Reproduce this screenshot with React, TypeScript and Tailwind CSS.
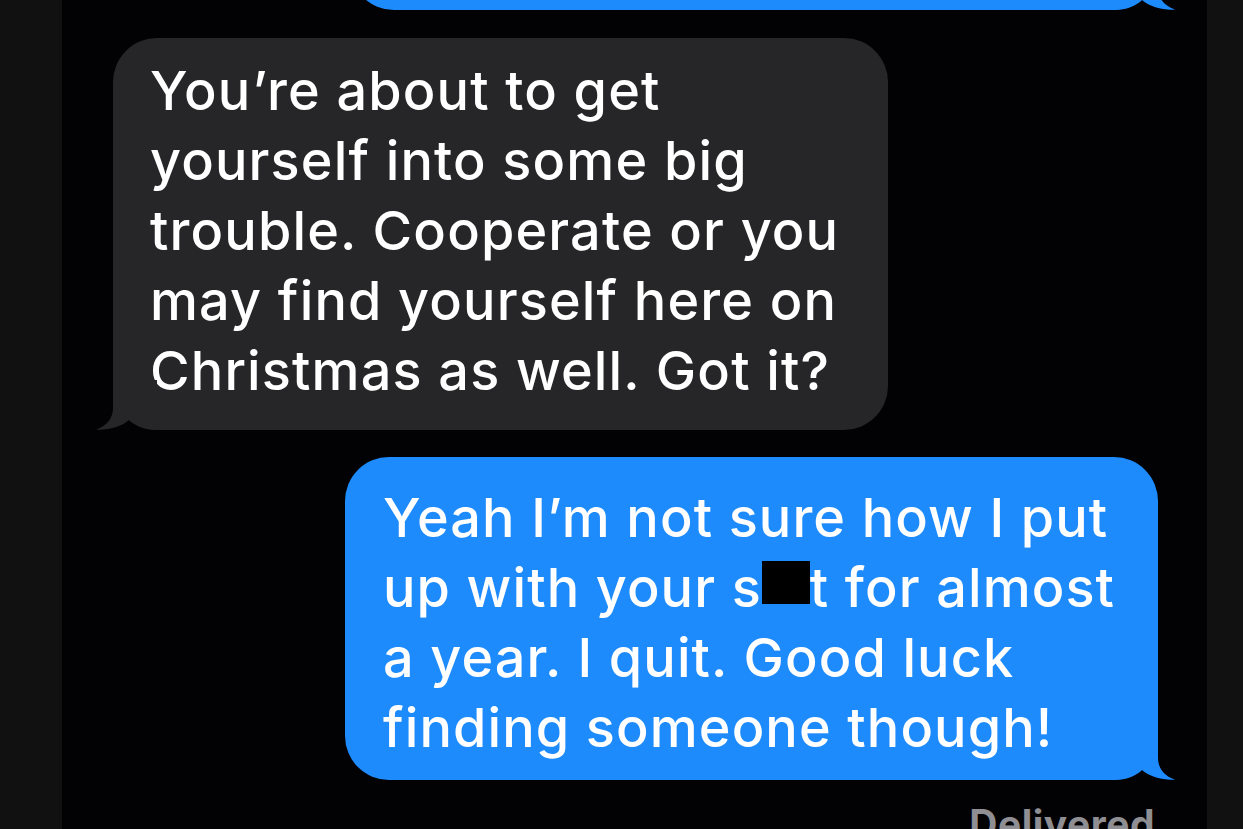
import React from "react";

const BLUE = "#1e8bfc";
const GRAY = "#262628";

function RightTail({ color }: { color: string }) {
  return (
    <svg
      className="absolute right-[-20px] bottom-0"
      width="64"
      height="50"
      viewBox="0 0 64 50"
    >
      <path
        d="M44 0 L44 28 C44 38 50 46 61 49.5 C50 50.5 36 47 28 40 C22 46 12 50 0 50 L0 0 Z"
        fill={color}
      />
    </svg>
  );
}

function LeftTail({ color }: { color: string }) {
  return (
    <svg
      className="absolute left-[-20px] bottom-0"
      width="64"
      height="50"
      viewBox="0 0 64 50"
    >
      <path
        d="M20 0 L20 28 C20 38 14 46 3 49.5 C14 50.5 28 47 36 40 C42 46 52 50 64 50 L64 0 Z"
        fill={color}
      />
    </svg>
  );
}

export default function App() {
  const font = { fontFamily: "Inter, 'Noto Sans', sans-serif" };
  return (
    <div className="flex h-[829px] w-full overflow-hidden bg-black" style={font}>
      <div className="w-[62px] shrink-0 bg-[#111111]" />
      <div className="flex flex-1 flex-col bg-[#020204]">
        {/* previous blue bubble, mostly scrolled off */}
        <div className="relative ml-[288px] mr-[49px] mt-[-90px] h-[100px] shrink-0 rounded-[44px] bg-[#1e8bfc]">
          <RightTail color={BLUE} />
        </div>

        {/* incoming grey bubble */}
        <div className="relative ml-[51px] mt-[28px] w-[775px] shrink-0 rounded-[44px] bg-[#262628] pl-[37px] pt-[18px] pb-[24px] text-[54px] font-medium leading-[70px] tracking-[1.15px] text-white">
          <div className="whitespace-nowrap">You’re about to get</div>
          <div className="whitespace-nowrap">yourself into some big</div>
          <div className="whitespace-nowrap">trouble. Cooperate or you</div>
          <div className="whitespace-nowrap">may find yourself here on</div>
          <div className="whitespace-nowrap">Christmas as well. Got it?</div>
          <LeftTail color={GRAY} />
        </div>

        {/* outgoing blue bubble */}
        <div className="relative ml-[283px] mr-[49px] mt-[27px] shrink-0 rounded-[44px] bg-[#1e8bfc] pl-[38px] pt-[26px] pb-[17px] text-[54px] font-medium leading-[70px] tracking-[1.1px] text-white">
          <div className="whitespace-nowrap">Yeah I’m not sure how I put</div>
          <div className="whitespace-nowrap">
            up with your s
            <span className="inline-block h-[43px] w-[48px] overflow-hidden bg-black align-[3px] leading-[43px] text-black">
              hi
            </span>
            t for almost
          </div>
          <div className="whitespace-nowrap">a year. I quit. Good luck</div>
          <div className="whitespace-nowrap">finding someone though!</div>
          <RightTail color={BLUE} />
        </div>

        <div className="mr-[52px] mt-[24px] text-right text-[39px] font-bold leading-[40px] tracking-[0.5px] text-[#8e8e93]">
          Delivered
        </div>
      </div>
      <div className="w-[36px] shrink-0 bg-[#111111]" />
    </div>
  );
}
